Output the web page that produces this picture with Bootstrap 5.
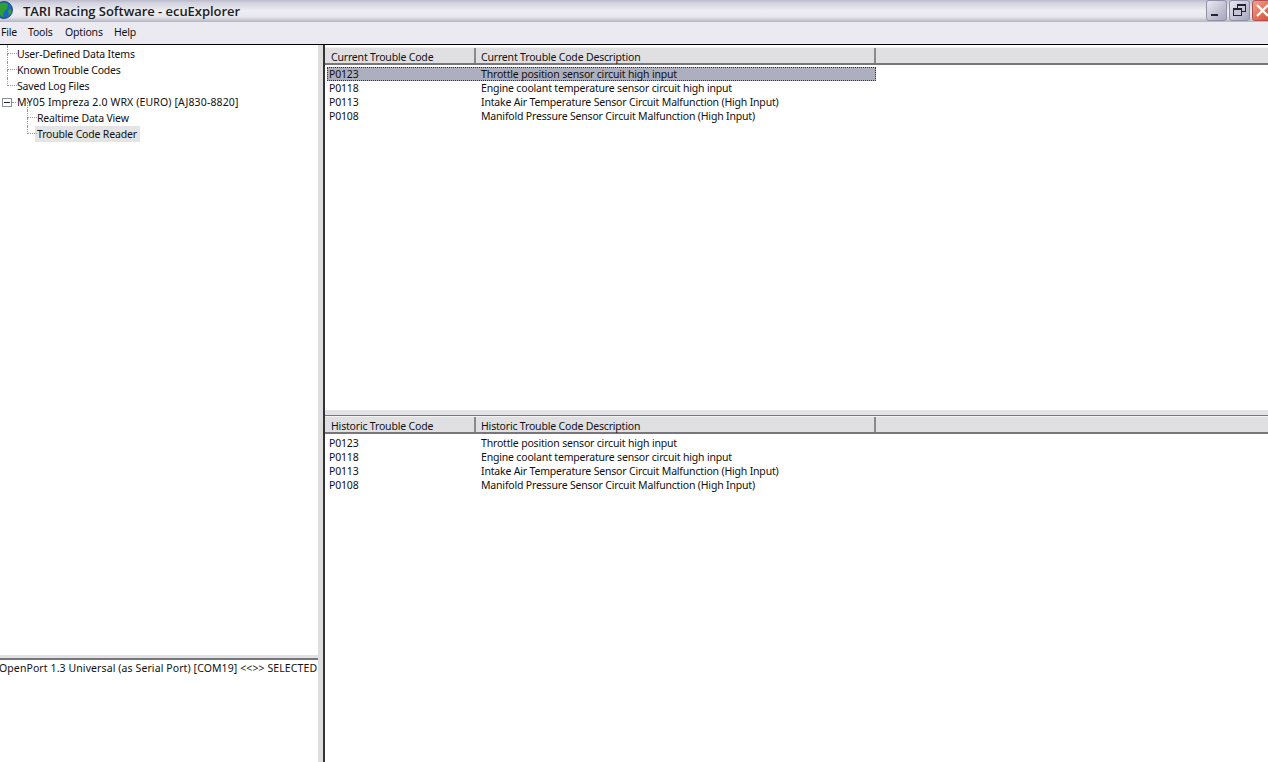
<!DOCTYPE html>
<html lang="en">
<head>
  <meta charset="UTF-8" />
  <title>TARI Racing Software - ecuExplorer</title>
  <link href="https://cdn.jsdelivr.net/npm/bootstrap@5.3.3/dist/css/bootstrap.min.css" rel="stylesheet" />
  <style>
    html, body { height: 100%; overflow: hidden; }
    body { font-family: "Noto Sans", sans-serif; font-size: 10.5px; letter-spacing: -.18px; line-height: 14px; color: #111; background: #fff; }
    .app-shell { width: 1268px; height: 762px; overflow: hidden; }
    .title-strip { height: 22px; background: linear-gradient(#b9b9cb 0, #d3d3df 3px, #eeeef3 11px, #e6e6ec 17px, #b4b4c4 22px); }
    .title-text { font-family: "Open Sans", sans-serif; font-size: 13px; font-weight: 600; line-height: 22px; margin-left: 23px; color: #1c1c24; letter-spacing: -.04px; }
    .app-globe { position: absolute; left: -5px; top: 1px; }
    .win-btn { width: 21px; height: 21px; border: 1px solid #8f8fa6; border-radius: 3px; background: linear-gradient(135deg, #e9e9f1, #a5a5bd); margin-right: 2px; }
    .win-btn svg { display: block; }
    .win-close { background: linear-gradient(135deg, #f0a28e, #d5472c); border-color: #b05050; margin-right: -5px; flex: none; }
    .menu-strip { height: 22px; background: #eceaf1; border-bottom: 1px solid #000; box-shadow: 0 1px 0 #8d8d8d; padding-left: 1px; line-height: 21px; box-sizing: content-box; }
    .menu-file { width: 27px; }
    .menu-tools { width: 37px; }
    .menu-options { width: 49px; }
    .work-area { height: 717px; }
    .left-side { width: 318px; flex: none; }
    .tree-pane { height: 610px; padding: 1px 0 0 0; background: #fff; overflow: hidden; }
    .tree-row { height: 16px; line-height: 16px; white-space: nowrap; }
    .tree-gap { width: 7px; flex: none; }
    .tree-gap-sub { width: 27px; flex: none; }
    .tree-link { width: 10px; height: 8px; flex: none; border-left: 1px dotted #999; border-bottom: 1px dotted #999; margin-bottom: 8px; position: relative; }
    .tree-link::before { content: ""; position: absolute; left: -1px; top: -8px; height: 8px; border-left: 1px dotted #999; }
    .tree-tick { width: 10px; height: 9px; flex: none; border: 1px solid #8b8ba0; background: #fff; margin-left: 2px; margin-right: 5px; position: relative; }
    .tree-tick::after { content: ""; position: absolute; left: 1px; top: 3px; width: 6px; height: 1px; background: #222; }
    .tree-tick::before { content: ""; position: absolute; left: 9px; top: 3px; width: 4px; border-top: 1px dotted #999; }
    .tree-sel { background: #e4e4e4; padding: 0 3px 0 2px; margin-left: -2px; }
    .tree-wide { letter-spacing: .14px; }
    .hz-split { height: 5px; background: #e2e2e6; border-bottom: 2px solid #77777a; }
    .port-pane { flex: 1; padding-top: 1px; white-space: nowrap; margin-left: -1px; overflow: hidden; letter-spacing: .1px; }
    .vt-split { width: 7px; flex: none; background: #dededf; border-right: 2px solid #333; }
    .right-side { flex: 1; min-width: 0; }
    .code-pane { background: #fff; }
    .code-pane-top { height: 365px; padding-top: 2px; }
    .code-pane-bottom { flex: 1; }
    .pane-break { height: 6px; background: #e4e4e8; border-bottom: 1px solid #777; }
    .grid-head { height: 18px; background: #e0e0e3; border-bottom: 2px solid #77777b; border-top: 1px solid #f3f3f3; line-height: 19px; }
    .head-one { width: 151px; flex: none; padding-left: 6px; border-right: 2px solid #8a8a8d; }
    .head-two { width: 400px; flex: none; padding-left: 5px; border-right: 2px solid #8a8a8d; }
    .grid-rows { padding: 2px 0 0 2px; }
    .grid-line { width: 549px; height: 14px; line-height: 14px; }
    .grid-line-sel { background: #adafbe; outline: 1px dotted #333; outline-offset: -1px; }
    .cell-one { width: 154px; flex: none; padding-left: 2px; }
  </style>
</head>
<body>
  <div class="app-shell d-flex flex-column">
    <div class="title-strip d-flex align-items-start justify-content-between position-relative">
      <svg class="app-globe" width="18" height="18" viewBox="0 0 18 18">
        <circle cx="9" cy="9" r="8.5" fill="#1b67c4" stroke="#0d2f5c" stroke-width=".8" />
        <path d="M4 3c3-2 7-2 9 0l-1 5-3 2-1 6-3-2-1-4-3-2z" fill="#2f9e35" />
        <path d="M13 9l3-1 1 3-3 4z" fill="#2f9e35" />
      </svg>
      <div class="title-text">TARI Racing Software - ecuExplorer</div>
      <div class="d-flex pt-0">
        <div class="win-btn">
          <svg width="19" height="19" viewBox="0 0 19 19"><rect x="4" y="13" width="7" height="2" fill="#222235" /></svg>
        </div>
        <div class="win-btn">
          <svg width="19" height="19" viewBox="0 0 19 19" fill="none" stroke="#222235"><rect x="7.5" y="3.5" width="8" height="7" /><rect x="3.5" y="7.5" width="8" height="7" fill="#c5c5d6" /><path d="M7 4.5h9M3 8.5h9" /></svg>
        </div>
        <div class="win-btn win-close">
          <svg width="19" height="19" viewBox="0 0 19 19" stroke="#fff" stroke-width="2.4"><path d="M4 4l11 11M15 4L4 15" /></svg>
        </div>
      </div>
    </div>
    <div class="menu-strip d-flex">
      <span class="menu-file">File</span><span class="menu-tools">Tools</span><span class="menu-options">Options</span><span>Help</span>
    </div>
    <div class="work-area d-flex">
      <div class="left-side d-flex flex-column">
        <div class="tree-pane">
          <div class="tree-row d-flex align-items-end"><span class="tree-gap"></span><span class="tree-link"></span><span>User-Defined Data Items</span></div>
          <div class="tree-row d-flex align-items-end"><span class="tree-gap"></span><span class="tree-link"></span><span>Known Trouble Codes</span></div>
          <div class="tree-row d-flex align-items-end"><span class="tree-gap"></span><span class="tree-link"></span><span>Saved Log Files</span></div>
          <div class="tree-row d-flex align-items-center"><span class="tree-tick"></span><span class="tree-wide">MY05 Impreza 2.0 WRX (EURO) [AJ830-8820]</span></div>
          <div class="tree-row d-flex align-items-end"><span class="tree-gap-sub"></span><span class="tree-link"></span><span>Realtime Data View</span></div>
          <div class="tree-row d-flex align-items-end"><span class="tree-gap-sub"></span><span class="tree-link"></span><span class="tree-sel">Trouble Code Reader</span></div>
        </div>
        <div class="hz-split"></div>
        <div class="port-pane">OpenPort 1.3 Universal (as Serial Port) [COM19] &lt;&lt;&gt;&gt; SELECTED</div>
      </div>
      <div class="vt-split"></div>
      <div class="right-side d-flex flex-column">
        <div class="code-pane code-pane-top">
          <div class="grid-head d-flex">
            <div class="head-one">Current Trouble Code</div>
            <div class="head-two">Current Trouble Code Description</div>
          </div>
          <div class="grid-rows">
            <div class="grid-line grid-line-sel d-flex"><div class="cell-one">P0123</div><div>Throttle position sensor circuit high input</div></div>
            <div class="grid-line d-flex"><div class="cell-one">P0118</div><div>Engine coolant temperature sensor circuit high input</div></div>
            <div class="grid-line d-flex"><div class="cell-one">P0113</div><div>Intake Air Temperature Sensor Circuit Malfunction (High Input)</div></div>
            <div class="grid-line d-flex"><div class="cell-one">P0108</div><div>Manifold Pressure Sensor Circuit Malfunction (High Input)</div></div>
          </div>
        </div>
        <div class="pane-break"></div>
        <div class="code-pane code-pane-bottom">
          <div class="grid-head d-flex">
            <div class="head-one">Historic Trouble Code</div>
            <div class="head-two">Historic Trouble Code Description</div>
          </div>
          <div class="grid-rows">
            <div class="grid-line d-flex"><div class="cell-one">P0123</div><div>Throttle position sensor circuit high input</div></div>
            <div class="grid-line d-flex"><div class="cell-one">P0118</div><div>Engine coolant temperature sensor circuit high input</div></div>
            <div class="grid-line d-flex"><div class="cell-one">P0113</div><div>Intake Air Temperature Sensor Circuit Malfunction (High Input)</div></div>
            <div class="grid-line d-flex"><div class="cell-one">P0108</div><div>Manifold Pressure Sensor Circuit Malfunction (High Input)</div></div>
          </div>
        </div>
      </div>
    </div>
  </div>
  <script src="https://cdn.jsdelivr.net/npm/bootstrap@5.3.3/dist/js/bootstrap.bundle.min.js"></script>
</body>
</html>
